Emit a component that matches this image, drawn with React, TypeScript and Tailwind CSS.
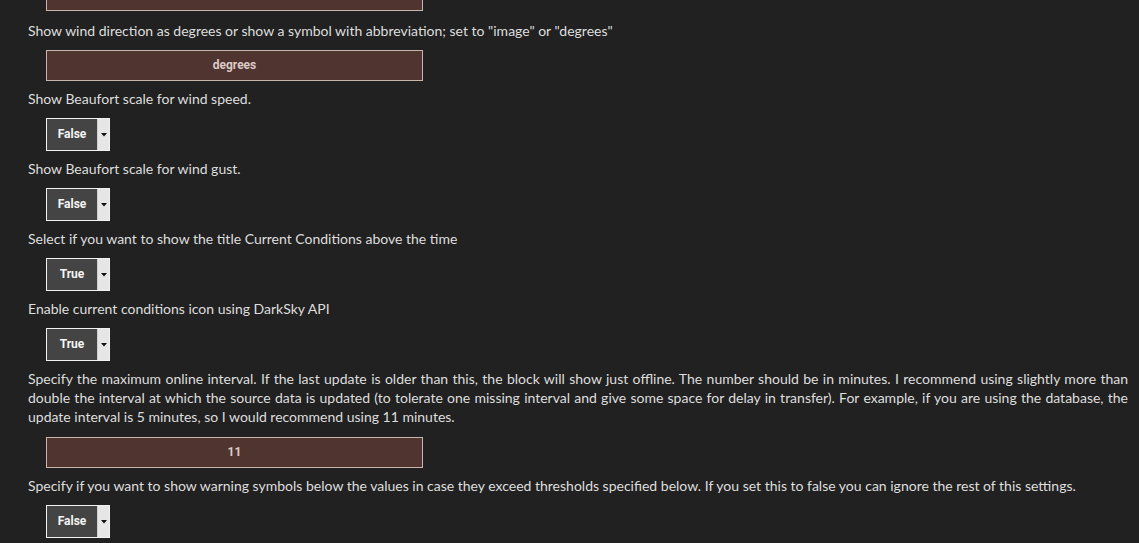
type Setting =
  | { kind: "input"; label?: string; value: string }
  | { kind: "select"; label: string; value: string };

const settings: Setting[] = [
  {
    kind: "input",
    label:
      'Show wind direction as degrees or show a symbol with abbreviation; set to "image" or "degrees"',
    value: "degrees",
  },
  { kind: "select", label: "Show Beaufort scale for wind speed.", value: "False" },
  { kind: "select", label: "Show Beaufort scale for wind gust.", value: "False" },
  {
    kind: "select",
    label: "Select if you want to show the title Current Conditions above the time",
    value: "True",
  },
  { kind: "select", label: "Enable current conditions icon using DarkSky API", value: "True" },
  {
    kind: "input",
    label:
      "Specify the maximum online interval. If the last update is older than this, the block will show just offline. The number should be in minutes. I recommend using slightly more than double the interval at which the source data is updated (to tolerate one missing interval and give some space for delay in transfer). For example, if you are using the database, the update interval is 5 minutes, so I would recommend using 11 minutes.",
    value: "11",
  },
  {
    kind: "select",
    label:
      "Specify if you want to show warning symbols below the values in case they exceed thresholds specified below. If you set this to false you can ignore the rest of this settings.",
    value: "False",
  },
];

function TextBox({ value }: { value: string }) {
  return (
    <div className="ml-[18px] w-[377px] h-[31px] border border-[#c9b5ae] bg-[#4f3430] flex items-center justify-center font-['Roboto',sans-serif] font-bold text-[12px] text-[#dccbc6]">
      {value}
    </div>
  );
}

function Dropdown({ value }: { value: string }) {
  return (
    <div className="ml-[18px] w-[64px] h-[33px] border border-[#f2f2f2] flex">
      <div className="flex-1 bg-[#444444] flex items-center justify-center font-['Roboto',sans-serif] font-bold text-[12px] text-[#f4f4f4]">
        {value}
      </div>
      <div className="w-[12px] bg-[#e6e6e6] border-l border-[#cfcfcf] flex items-center justify-center">
        <svg width="6" height="4" viewBox="0 0 6 4">
          <path d="M0 0h6L3 3.5z" fill="#111" />
        </svg>
      </div>
    </div>
  );
}

export default function App() {
  return (
    <div className="min-h-screen h-[543px] overflow-hidden bg-[#212121] pl-[28px] pr-[11px] font-['Lato',sans-serif] text-[14px] leading-[19px] text-[#dedede]">
      {/* previous setting, scrolled mostly out of view */}
      <div className="mt-[-20px]">
        <TextBox value="0.5" />
      </div>

      {settings.map((s, i) => (
        <div key={i} className={i === 0 ? "mt-[10px]" : "mt-[8px]"}>
          <p className="text-justify">{s.label}</p>
          <div className={s.kind === "input" && i > 0 ? "mt-[11px]" : "mt-[10px]"}>
            {s.kind === "input" ? <TextBox value={s.value} /> : <Dropdown value={s.value} />}
          </div>
        </div>
      ))}
    </div>
  );
}
